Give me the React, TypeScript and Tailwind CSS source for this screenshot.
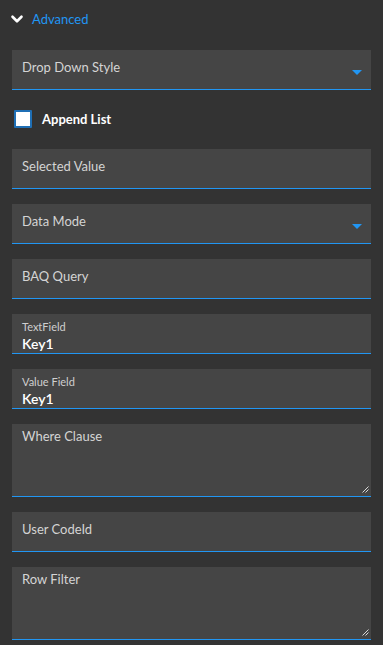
import { ChevronDown } from 'lucide-react';

const font = { fontFamily: 'Lato, "Open Sans", sans-serif' };

function Grip() {
  return (
    <svg className="absolute right-[2px] bottom-[3px]" width="7" height="7" viewBox="0 0 7 7">
      <path d="M6.5 0.5 L0.5 6.5 M6.5 3.5 L3.5 6.5" stroke="#d8d8d8" strokeWidth="1" />
    </svg>
  );
}

function Field({ label, dropdown }: { label: string; dropdown?: boolean }) {
  return (
    <div className="relative h-10 bg-[#454545] border-b border-[#2196f3] px-[10px] pt-[8px]">
      <div className="text-[13px] leading-[18px] text-[#d4d4d4]">{label}</div>
      {dropdown && (
        <svg className="absolute right-[9px] top-[20px]" width="10" height="5" viewBox="0 0 10 5">
          <path d="M0 0 H10 L5 5 Z" fill="#2196f3" />
        </svg>
      )}
    </div>
  );
}

function ValueField({ label, value }: { label: string; value: string }) {
  return (
    <div className="h-10 bg-[#454545] border-b border-[#2196f3] px-[10px] pt-[6px] flex flex-col">
      <div className="text-[11px] leading-[13px] text-[#cfcfcf]">{label}</div>
      <div className="text-[14px] leading-[22px] font-semibold text-white">{value}</div>
    </div>
  );
}

function AreaField({ label }: { label: string }) {
  return (
    <div className="relative h-[73px] bg-[#454545] border-b border-[#2196f3] px-[10px] pt-[3px]">
      <div className="text-[13px] leading-[18px] text-[#d4d4d4]">{label}</div>
      <Grip />
    </div>
  );
}

export default function App() {
  return (
    <div className="w-[383px] h-[645px] bg-[#333333] overflow-hidden" style={font}>
      <div className="flex items-center gap-[6px] pl-[8px] h-[38px]">
        <ChevronDown className="w-[18px] h-[18px] text-white" strokeWidth={3.5} />
        <span className="text-[13px] leading-[18px] text-[#2196f3]">Advanced</span>
      </div>

      <div className="px-3 pt-3 flex flex-col">
        <Field label="Drop Down Style" dropdown />

        <div className="flex items-center h-[59px] pl-[2px] pb-[2px] gap-[10px]">
          <div className="w-[18px] h-[18px] bg-white border-2 border-[#1f6fb5] rounded-[1px]" />
          <span className="text-[13px] leading-[18px] font-bold text-white">Append List</span>
        </div>

        <div className="flex flex-col gap-[15px]">
          <Field label="Selected Value" />
          <Field label="Data Mode" dropdown />
          <Field label="BAQ Query" />
          <ValueField label="TextField" value="Key1" />
          <ValueField label="Value Field" value="Key1" />
          <AreaField label="Where Clause" />
          <Field label="User CodeId" />
          <AreaField label="Row Filter" />
        </div>
      </div>
    </div>
  );
}
